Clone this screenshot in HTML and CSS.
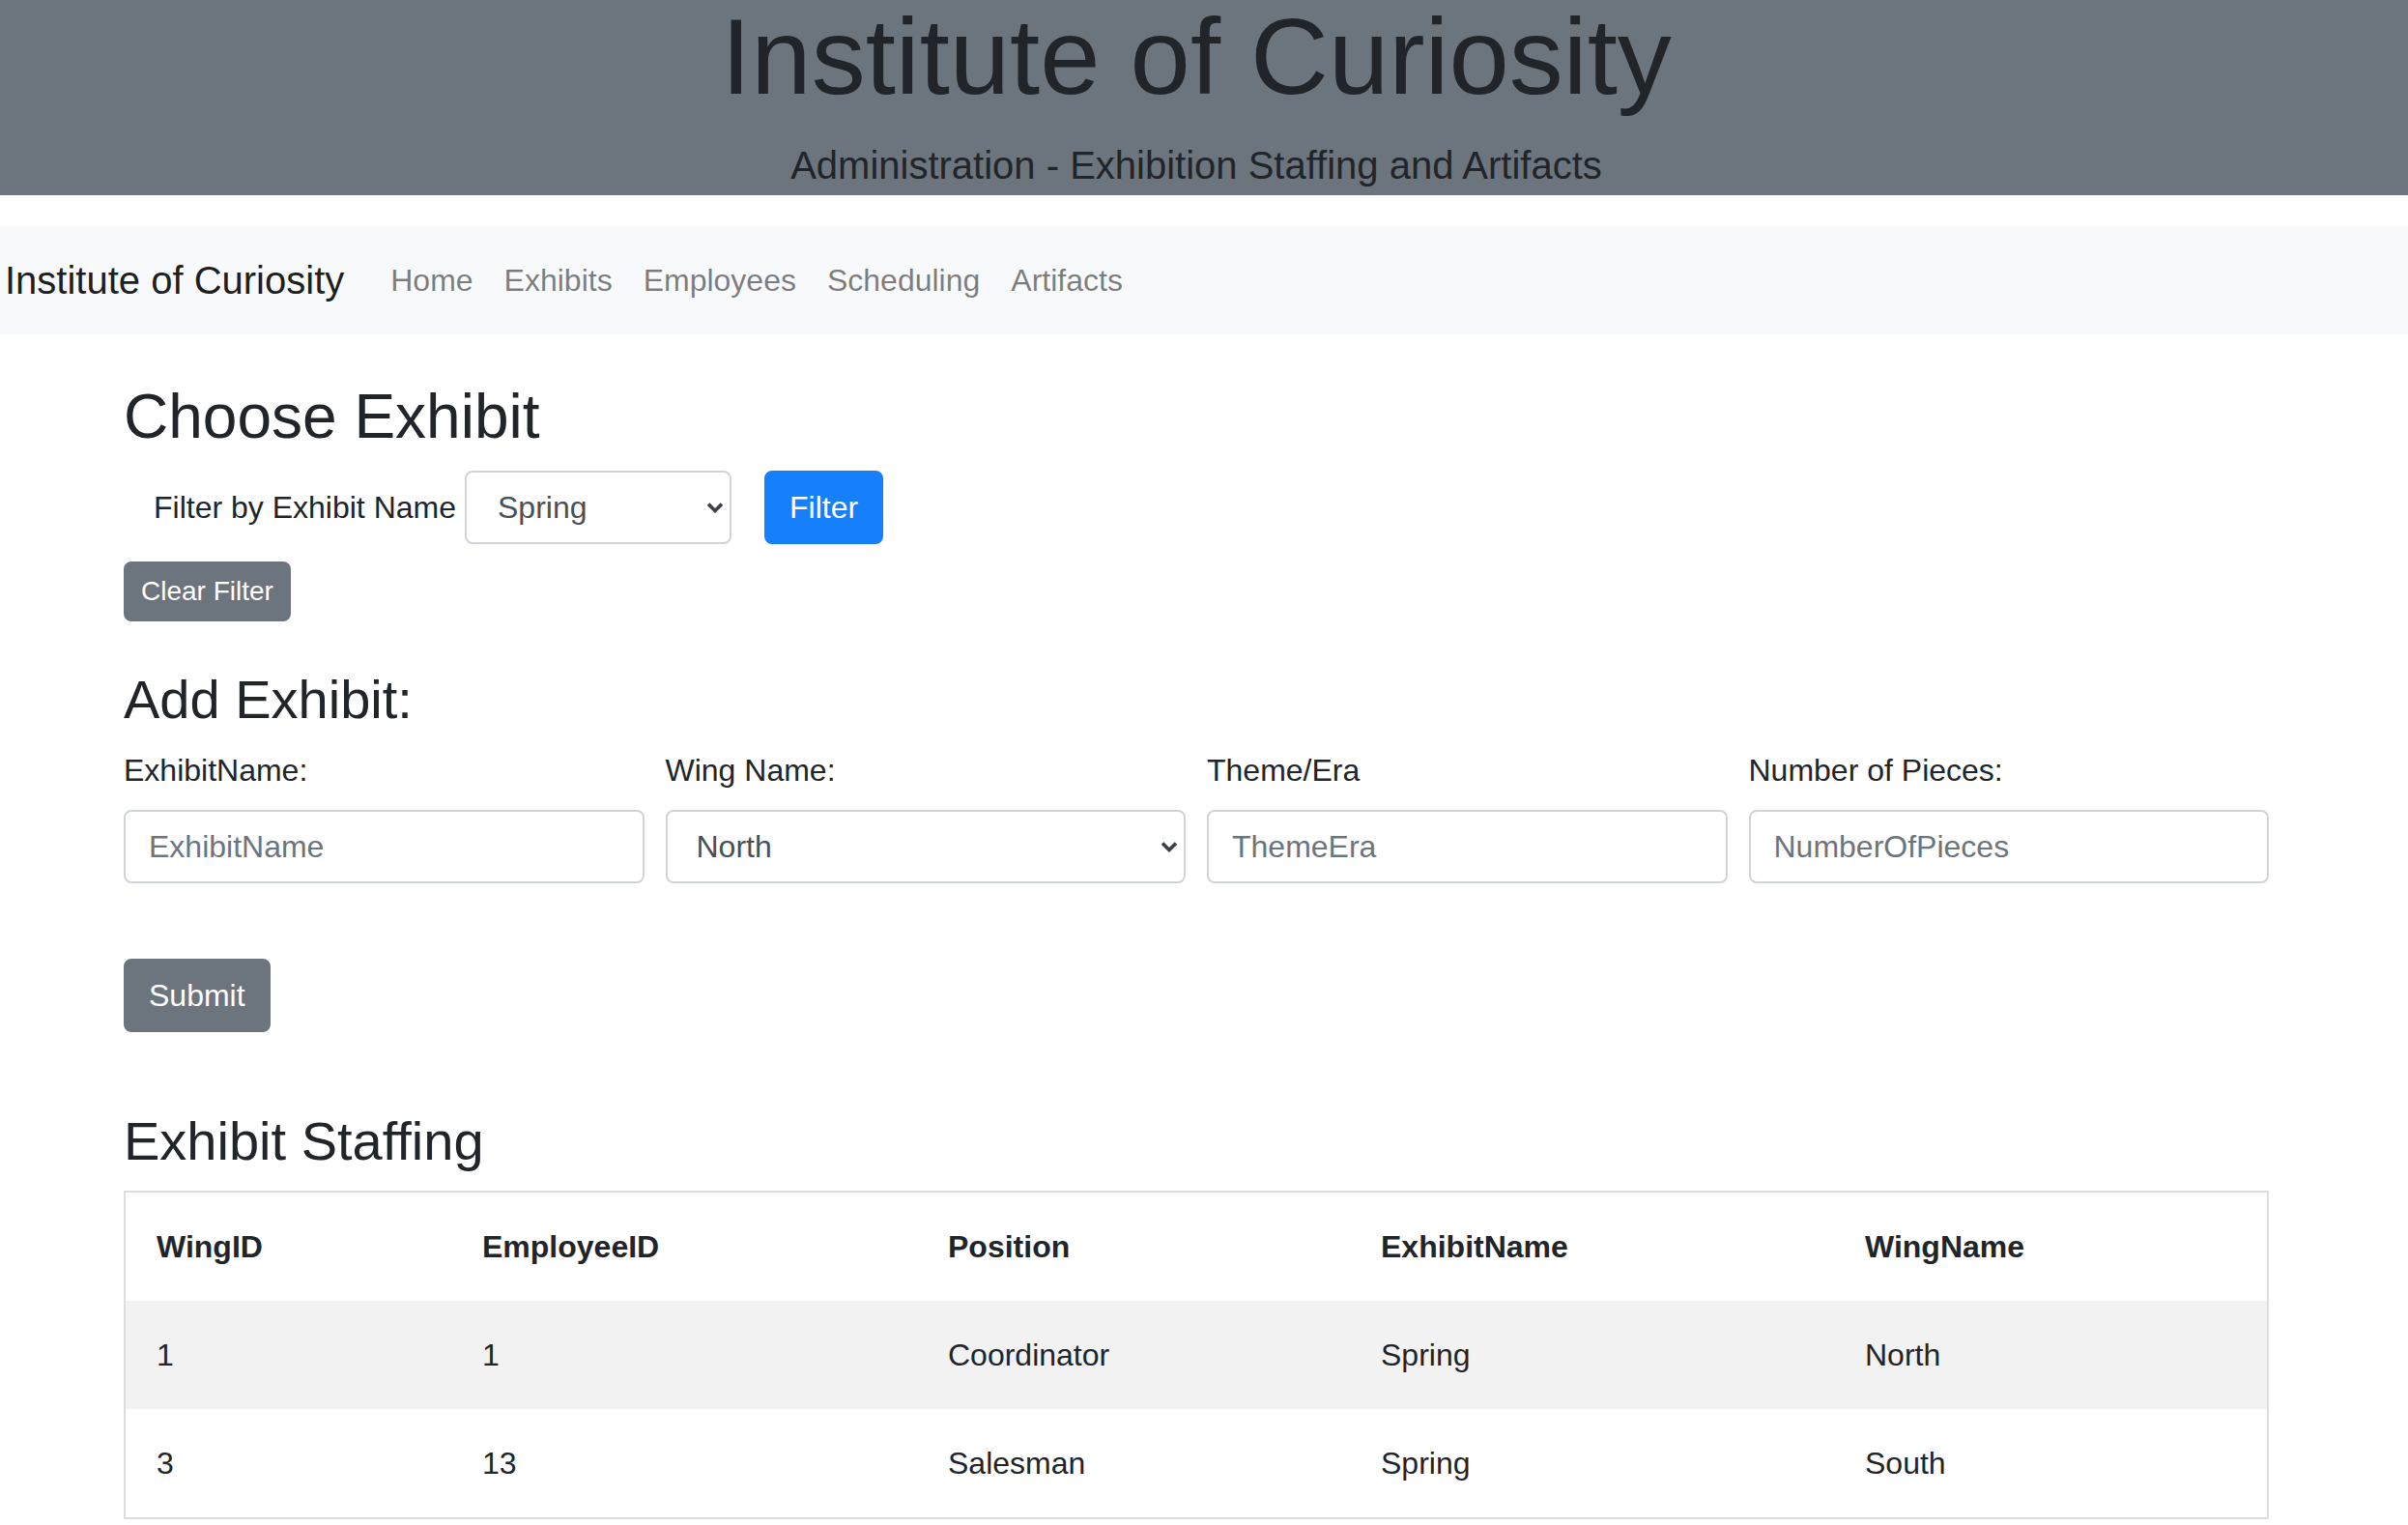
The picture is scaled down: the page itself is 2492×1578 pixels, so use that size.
FILE: index.html
```html
<!DOCTYPE html>
<html lang="en">
<head>
<meta charset="utf-8">
<title>Institute of Curiosity</title>
<link rel="stylesheet" href="styles.css">
</head>
<body>
<header class="masthead">
  <h1 class="masthead-title">Institute of Curiosity</h1>
  <p class="masthead-lead">Administration - Exhibition Staffing and Artifacts</p>
</header>

<nav class="navbar">
  <a class="brand" href="#">Institute of Curiosity</a>
  <a class="nav-link" href="#">Home</a>
  <a class="nav-link" href="#">Exhibits</a>
  <a class="nav-link" href="#">Employees</a>
  <a class="nav-link" href="#">Scheduling</a>
  <a class="nav-link" href="#">Artifacts</a>
</nav>

<main class="container">
  <h2 class="h2">Choose Exhibit</h2>
  <form class="filter-row">
    <label class="filter-label" for="filterName">Filter by Exhibit Name</label>
    <div class="select-wrap select-small">
      <select id="filterName" class="select">
        <option>Spring</option>
      </select>
      <svg class="chevron" width="18" height="12" viewBox="0 0 18 12"><path d="M2 2.5 L9 9.5 L16 2.5" fill="none" stroke="#3c4045" stroke-width="3.6"/></svg>
    </div>
    <button type="button" class="btn btn-primary">Filter</button>
  </form>
  <div class="clear-row">
    <button type="button" class="btn btn-secondary btn-sm">Clear Filter</button>
  </div>

  <h3 class="h3">Add Exhibit:</h3>
  <form class="add-grid">
    <div class="field">
      <label class="field-label" for="exName">ExhibitName:</label>
      <input id="exName" class="input" type="text" placeholder="ExhibitName">
    </div>
    <div class="field">
      <label class="field-label" for="wing">Wing Name:</label>
      <div class="select-wrap">
        <select id="wing" class="select select-full">
          <option>North</option>
        </select>
        <svg class="chevron" width="18" height="12" viewBox="0 0 18 12"><path d="M2 2.5 L9 9.5 L16 2.5" fill="none" stroke="#3c4045" stroke-width="3.6"/></svg>
      </div>
    </div>
    <div class="field">
      <label class="field-label" for="theme">Theme/Era</label>
      <input id="theme" class="input" type="text" placeholder="ThemeEra">
    </div>
    <div class="field">
      <label class="field-label" for="pieces">Number of Pieces:</label>
      <input id="pieces" class="input" type="text" placeholder="NumberOfPieces">
    </div>
  </form>
  <div class="submit-row">
    <button type="button" class="btn btn-secondary">Submit</button>
  </div>

  <h3 class="h3 staffing-title">Exhibit Staffing</h3>
  <table class="staff-table">
    <thead>
      <tr>
        <th class="c1">WingID</th>
        <th class="c2">EmployeeID</th>
        <th class="c3">Position</th>
        <th class="c4">ExhibitName</th>
        <th class="c5">WingName</th>
      </tr>
    </thead>
    <tbody>
      <tr class="striped">
        <td>1</td><td>1</td><td>Coordinator</td><td>Spring</td><td>North</td>
      </tr>
      <tr>
        <td>3</td><td>13</td><td>Salesman</td><td>Spring</td><td>South</td>
      </tr>
    </tbody>
  </table>
</main>
</body>
</html>
```

FILE: styles.css
```css
* { box-sizing: border-box; }

html, body {
  margin: 0;
  padding: 0;
  background: #fff;
}

body {
  font-family: "Liberation Sans", Arial, Helvetica, sans-serif;
  font-size: 32px;
  line-height: 48px;
  color: #212529;
}

.masthead {
  background: #6c757d;
  height: 202px;
  padding-right: 16px;
  text-align: center;
  display: flex;
  flex-direction: column;
  align-items: center;
}

.masthead-title {
  margin: 0;
  font-size: 112px;
  font-weight: 300;
  line-height: 118px;
  color: #212529;
}

.masthead-lead {
  margin: 23px 0 0;
  font-size: 40px;
  line-height: 60px;
  font-weight: 300;
  color: #212529;
}

.navbar {
  margin-top: 32px;
  background: #f8f9fa;
  height: 112px;
  padding: 16px 32px 16px 5px;
  display: flex;
  align-items: center;
}

.brand {
  font-size: 40px;
  line-height: 60px;
  padding: 10px 0;
  margin-right: 32px;
  color: rgba(0, 0, 0, 0.9);
  text-decoration: none;
  white-space: nowrap;
}

.nav-link {
  padding: 16px;
  font-size: 32px;
  line-height: 48px;
  color: rgba(0, 0, 0, 0.5);
  text-decoration: none;
}

.container {
  width: 2220px;
  margin-left: 128px;
  padding-top: 47px;
}

.h2 {
  margin: 0 0 17px;
  font-size: 64px;
  line-height: 77px;
  font-weight: 500;
}

.h3 {
  margin: 0 0 16px;
  font-size: 56px;
  line-height: 67px;
  font-weight: 500;
}

.filter-row {
  display: flex;
  align-items: center;
  height: 76px;
}

.filter-label {
  margin-left: 31px;
  margin-right: 9px;
  white-space: nowrap;
}

.select-wrap {
  position: relative;
}

.select-small {
  width: 276px;
}

.select {
  -webkit-appearance: none;
  appearance: none;
  display: block;
  width: 100%;
  height: 76px;
  padding: 0 40px 0 32px;
  font-family: inherit;
  font-size: 32px;
  color: #495057;
  background: #fff;
  border: 2px solid #ced4da;
  border-radius: 8px;
}

.chevron {
  position: absolute;
  right: 8px;
  top: 32px;
  pointer-events: none;
}

.btn {
  display: inline-block;
  font-family: inherit;
  font-size: 32px;
  line-height: 48px;
  padding: 12px 24px;
  border: 2px solid transparent;
  border-radius: 8px;
  color: #fff;
  cursor: pointer;
}

.btn-primary {
  background: #167ffc;
  border-color: #167ffc;
  margin-left: 34px;
}

.btn-secondary {
  background: #6c757d;
  border-color: #6c757d;
}

.btn-sm {
  font-size: 28px;
  line-height: 42px;
  padding: 8px 16px;
}

.clear-row {
  margin-top: 18px;
  margin-bottom: 47px;
}

.add-grid {
  display: grid;
  grid-template-columns: repeat(4, 1fr);
  column-gap: 22px;
}

.field-label {
  display: block;
  margin-bottom: 17px;
}

.input {
  display: block;
  width: 100%;
  height: 76px;
  padding: 0 24px;
  font-family: inherit;
  font-size: 32px;
  color: #495057;
  background: #fff;
  border: 2px solid #ced4da;
  border-radius: 8px;
}

.input::placeholder {
  color: #6c757d;
  opacity: 1;
}

.select-full {
  padding-left: 30px;
}

.submit-row {
  margin-top: 78px;
  margin-bottom: 79px;
}

.staffing-title {
  margin-bottom: 18px;
}

.staff-table {
  width: 2220px;
  border-collapse: collapse;
  table-layout: fixed;
  border: 2px solid #dddddd;
}

.staff-table th,
.staff-table td {
  padding: 32px;
  text-align: left;
  vertical-align: top;
  line-height: 48px;
}

.staff-table th {
  font-weight: bold;
}

.c1 { width: 338px; }
.c2 { width: 482px; }
.c3 { width: 448px; }
.c4 { width: 501px; }

.striped {
  background: #f2f2f2;
}
```
